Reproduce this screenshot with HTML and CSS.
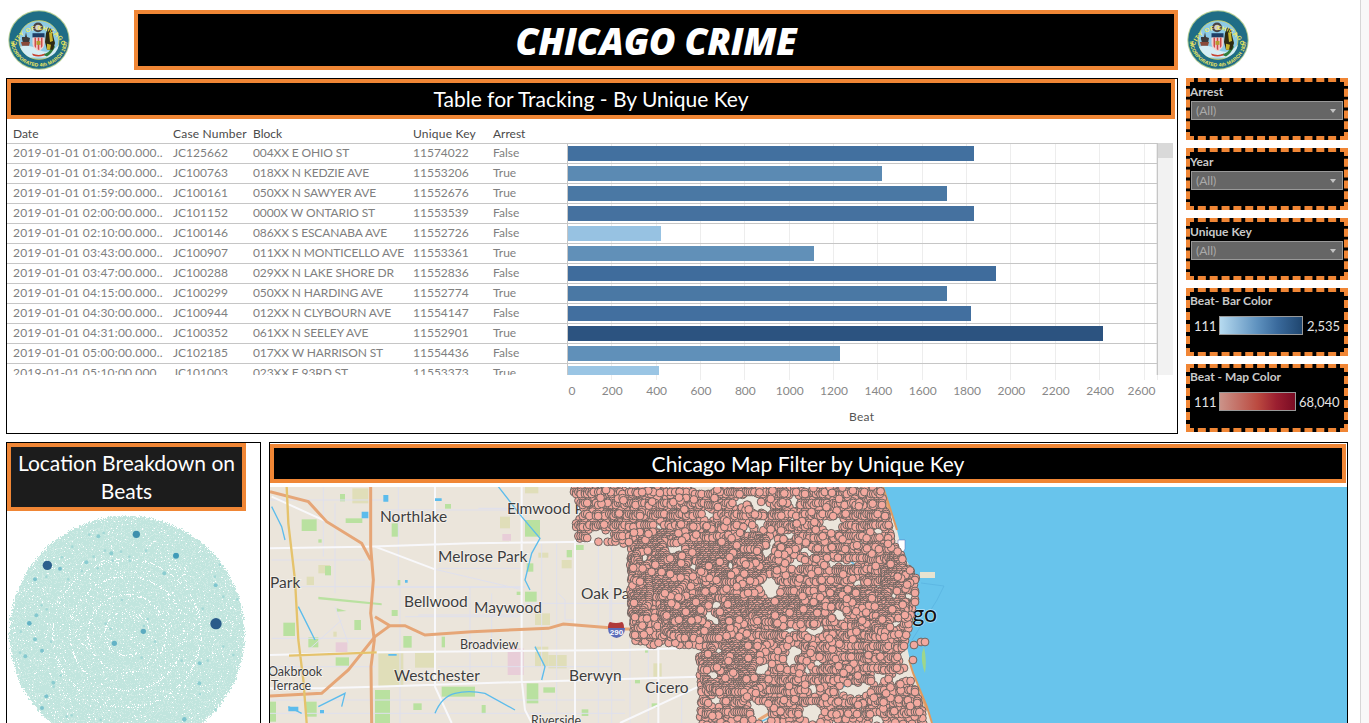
FILE: index.html
```html
<!DOCTYPE html>
<html lang="en">
<head>
<meta charset="utf-8">
<title>Chicago Crime</title>
<link rel="stylesheet" href="styles.css">
</head>
<body>
<svg class="defs" width="0" height="0" aria-hidden="true">
  <defs>
    <path id="sealTop" d="M7.500 38A24.500 24.500 0 0 1 54.500 38"/>
    <path id="sealBot" d="M2.500 30A28.500 28.500 0 0 0 59.500 30"/>
  </defs>
  <symbol id="seal" viewBox="0 0 62 62" preserveAspectRatio="none">
    <circle cx="31" cy="31" r="30.700" fill="#b4cd92"/>
    <circle cx="31" cy="31" r="29.700" fill="#1f6d86"/>
    <circle cx="31" cy="31" r="20" fill="#8ccae6" stroke="#d9d65a" stroke-width=".8"/>
    <path d="M12 38q9-3 19 3t20-5q-2 10-11 13H22q-7-3-10-11z" fill="#d4edf5"/>
    <path d="M34 46q8-1 11-10l2 2q-3 7-8 10z" fill="#2f7d3c"/>
    <circle cx="30" cy="18" r="5" fill="#4a4444"/>
    <circle cx="30" cy="18" r="2.800" fill="#d4cfca"/>
    <path d="M14 28h3l1-5 1 5 3 1-1 5h-6l-1-4z" fill="#3d3a3a"/>
    <path d="M13 33h9l-1 4h-7z" fill="#8a4a3a"/>
    <path d="M40 18l4 2 1 6 2 8-2 7h-6l-2-8 1-9z" fill="#2d2a12"/>
    <path d="M41 23l3 1 1 8-3 1zM39 35l4 1-1 5h-3z" fill="#c9b52e"/>
    <rect x="24.500" y="24" width="12" height="4.500" fill="#1d3d66"/>
    <path d="M24.500 28.500h12v6q0 5-6 8-6-3-6-8z" fill="#f3d3cf"/>
    <path d="M26.500 28.500h1.600v11l-1.600-2zM29.700 28.500h1.600v13l-1.600-1zM32.900 28.500h1.600v9l-1.600 2z" fill="#cf4b4b"/>
    <path d="M28.500 32h4v4h-4z" fill="#b59b2e"/>
    <path d="M24 45q7 3 13 0l-1 2q-6 2-11 0z" fill="#c8402e"/>
    <text class="seal-text"><textPath href="#sealTop" startOffset="50%" text-anchor="middle">CITY OF CHICAGO</textPath></text>
    <text class="seal-text seal-bottom"><textPath href="#sealBot" startOffset="50%" text-anchor="middle">INCORPORATED 4th MARCH 1837</textPath></text>
  </symbol>
</svg>

<main class="dash">
  <header class="top">
    <div class="logo-slot"><svg class="seal"><use href="#seal"/></svg></div>
    <h1 class="main-title">CHICAGO CRIME</h1>
    <div class="logo-slot-right"><svg class="seal"><use href="#seal"/></svg></div>
  </header>

  <section class="mid">
    <div class="panel table-panel">
      <h2 class="band">Table for Tracking - By Unique Key</h2>
      <div class="row head-row">
        <span class="c-date">Date</span><span class="c-case">Case Number</span><span class="c-block">Block</span><span class="c-key">Unique Key</span><span class="c-arrest">Arrest</span>
      </div>
      <div class="table-body">
        <div class="rows">
          <div class="row"><span class="c-date">2019-01-01 01:00:00.000..</span><span class="c-case">JC125662</span><span class="c-block">004XX E OHIO ST</span><span class="c-key">11574022</span><span class="c-arrest">False</span><span class="c-bar"><i class="bar" style="width:406px;background:#42709f"></i></span></div>
          <div class="row"><span class="c-date">2019-01-01 01:34:00.000..</span><span class="c-case">JC100763</span><span class="c-block">018XX N KEDZIE AVE</span><span class="c-key">11553206</span><span class="c-arrest">True</span><span class="c-bar"><i class="bar" style="width:314px;background:#5b8ab3"></i></span></div>
          <div class="row"><span class="c-date">2019-01-01 01:59:00.000..</span><span class="c-case">JC100161</span><span class="c-block">050XX N SAWYER AVE</span><span class="c-key">11552676</span><span class="c-arrest">True</span><span class="c-bar"><i class="bar" style="width:379px;background:#4a78a4"></i></span></div>
          <div class="row"><span class="c-date">2019-01-01 02:00:00.000..</span><span class="c-case">JC101152</span><span class="c-block">0000X W ONTARIO ST</span><span class="c-key">11553539</span><span class="c-arrest">False</span><span class="c-bar"><i class="bar" style="width:406px;background:#45719f"></i></span></div>
          <div class="row"><span class="c-date">2019-01-01 02:10:00.000..</span><span class="c-case">JC100146</span><span class="c-block">086XX S ESCANABA AVE</span><span class="c-key">11552726</span><span class="c-arrest">False</span><span class="c-bar"><i class="bar" style="width:93px;background:#97c2e2"></i></span></div>
          <div class="row"><span class="c-date">2019-01-01 03:43:00.000..</span><span class="c-case">JC100907</span><span class="c-block">011XX N MONTICELLO AVE</span><span class="c-key">11553361</span><span class="c-arrest">True</span><span class="c-bar"><i class="bar" style="width:246px;background:#6190b8"></i></span></div>
          <div class="row"><span class="c-date">2019-01-01 03:47:00.000..</span><span class="c-case">JC100288</span><span class="c-block">029XX N LAKE SHORE DR</span><span class="c-key">11552836</span><span class="c-arrest">False</span><span class="c-bar"><i class="bar" style="width:428px;background:#3f6c9c"></i></span></div>
          <div class="row"><span class="c-date">2019-01-01 04:15:00.000..</span><span class="c-case">JC100299</span><span class="c-block">050XX N HARDING AVE</span><span class="c-key">11552774</span><span class="c-arrest">True</span><span class="c-bar"><i class="bar" style="width:379px;background:#4a78a4"></i></span></div>
          <div class="row"><span class="c-date">2019-01-01 04:30:00.000..</span><span class="c-case">JC100944</span><span class="c-block">012XX N CLYBOURN AVE</span><span class="c-key">11554147</span><span class="c-arrest">False</span><span class="c-bar"><i class="bar" style="width:403px;background:#426f9f"></i></span></div>
          <div class="row"><span class="c-date">2019-01-01 04:31:00.000..</span><span class="c-case">JC100352</span><span class="c-block">061XX N SEELEY AVE</span><span class="c-key">11552901</span><span class="c-arrest">True</span><span class="c-bar"><i class="bar" style="width:535px;background:#2c5380"></i></span></div>
          <div class="row"><span class="c-date">2019-01-01 05:00:00.000..</span><span class="c-case">JC102185</span><span class="c-block">017XX W HARRISON ST</span><span class="c-key">11554436</span><span class="c-arrest">False</span><span class="c-bar"><i class="bar" style="width:272px;background:#6090b9"></i></span></div>
          <div class="row"><span class="c-date">2019-01-01 05:10:00.000..</span><span class="c-case">JC101003</span><span class="c-block">023XX E 93RD ST</span><span class="c-key">11553373</span><span class="c-arrest">True</span><span class="c-bar"><i class="bar" style="width:91px;background:#9ac5e4"></i></span></div>
        </div>
        <div class="vscroll"><div class="vthumb"></div></div>
      </div>
      <div class="axis">
        <div class="axis-strip"></div>
        <div class="ticks"><span>0</span><span>200</span><span>400</span><span>600</span><span>800</span><span>1000</span><span>1200</span><span>1400</span><span>1600</span><span>1800</span><span>2000</span><span>2200</span><span>2400</span><span>2600</span></div>
        <div class="axis-title">Beat</div>
      </div>
    </div>

    <aside class="filters">
      <div class="filter">
        <div class="filter-label">Arrest</div>
        <div class="select"><span>(All)</span><i class="caret"></i></div>
      </div>
      <div class="filter">
        <div class="filter-label">Year</div>
        <div class="select"><span>(All)</span><i class="caret"></i></div>
      </div>
      <div class="filter">
        <div class="filter-label">Unique Key</div>
        <div class="select"><span>(All)</span><i class="caret"></i></div>
      </div>
      <div class="filter legend">
        <div class="filter-label">Beat- Bar Color</div>
        <div class="ramp-row"><span class="ramp-min">111</span><i class="ramp ramp-blue"></i><span>2,535</span></div>
      </div>
      <div class="filter legend">
        <div class="filter-label">Beat - Map Color</div>
        <div class="ramp-row"><span class="ramp-min">111</span><i class="ramp ramp-red"></i><span>68,040</span></div>
      </div>
    </aside>
  </section>

  <section class="bottom">
    <div class="panel bubble-panel">
      <h2 class="band band-two">Location Breakdown on Beats</h2>
      <canvas id="bubbles" class="bubbles" width="253" height="212"></canvas>
    </div>
    <div class="panel map-panel">
      <h2 class="band band-map">Chicago Map Filter by Unique Key</h2>
      <div class="map">
        <svg class="map-svg" viewBox="270 487 1077 236" width="1077" height="236" role="img" aria-label="Map of Chicago">
          <rect x="270" y="487" width="1077" height="236" class="land"/>
          <g transform="translate(265 480) scale(.33333)">
            <g class="sand">
              <rect x="262" y="25" width="48" height="45"/><rect x="125" y="290" width="22" height="25"/><rect x="160" y="255" width="35" height="25"/>
              <rect x="705" y="110" width="30" height="35"/><rect x="820" y="218" width="30" height="15"/><rect x="890" y="240" width="30" height="25"/>
              <rect x="810" y="400" width="45" height="35"/>
              <rect x="1165" y="550" width="25" height="40"/><rect x="780" y="20" width="40" height="20"/><rect x="205" y="455" width="10" height="15"/>
              <rect x="340" y="520" width="75" height="100"/><rect x="450" y="518" width="60" height="45"/><rect x="810" y="500" width="40" height="60"/><rect x="850" y="525" width="55" height="40"/>
            </g>
            <g class="park">
              <rect x="110" y="118" width="45" height="35"/><rect x="225" y="42" width="15" height="22"/><rect x="380" y="130" width="20" height="40"/>
              <rect x="242" y="115" width="50" height="14"/><rect x="540" y="72" width="18" height="14"/><rect x="160" y="178" width="10" height="10"/>
              <rect x="180" y="258" width="18" height="28"/><rect x="398" y="300" width="8" height="16"/><rect x="268" y="420" width="20" height="30"/>
              <rect x="380" y="390" width="18" height="18"/><rect x="55" y="428" width="35" height="40"/><rect x="130" y="472" width="30" height="30"/>
              <rect x="212" y="532" width="40" height="25"/>
              <rect x="415" y="468" width="25" height="35"/><rect x="530" y="470" width="10" height="32"/><rect x="780" y="120" width="45" height="50"/>
              <rect x="785" y="250" width="20" height="25"/><rect x="780" y="335" width="35" height="30"/>
              <rect x="785" y="610" width="35" height="60"/><rect x="905" y="210" width="16" height="22"/><rect x="932" y="195" width="24" height="15"/>
              <rect x="755" y="335" width="12" height="10"/><rect x="835" y="622" width="35" height="16"/><rect x="950" y="688" width="20" height="20"/>
              <rect x="120" y="665" width="35" height="45"/><rect x="15" y="665" width="18" height="60"/><rect x="330" y="630" width="45" height="99"/>
              <rect x="530" y="620" width="100" height="30"/><rect x="445" y="670" width="25" height="20"/><rect x="650" y="675" width="12" height="25"/>
              <rect x="1110" y="600" width="15" height="10"/><rect x="1140" y="510" width="12" height="8"/><rect x="1160" y="670" width="18" height="12"/>
              <path d="M160 350l190 20v6l-190-18zM215 385l30 8-30 2z"/>
            </g>
            <g class="pink">
              <rect x="212" y="487" width="35" height="30"/><rect x="728" y="505" width="48" height="80"/><rect x="712" y="162" width="26" height="20"/>
            </g>
            <path class="minor" d="M15 60H360M360 90H760M640 85H770M20 320H780M330 322H780M780 370H1080M420 410H760M20 475H330M15 560H330M520 560H1040M20 660H1080M15 700H1080M175 20V230M210 70V340M400 20V300M405 320V729M615 320V600M680 340V560M830 190V600M875 190V729M1000 190V729M1040 190V729M1095 480V729M1150 480V729M1250 600V729M20 240H300M230 420L130 510M510 268L775 330M460 405H770M520 265H770M210 380L250 490M640 10H770M880 340l20 20v60h30M1035 310V430"/>
            <path class="major" d="M15 205L300 200L620 190L1400 180M15 525L330 517L1080 510L1400 500M15 625H170L330 620L800 605L1300 590M510 20V620L560 729M770 20V600L780 690L800 729M930 180V729M1180 480V729M330 200L510 268M20 50L185 125M1065 729L1300 620"/>
            <path class="creek" d="M700 20L770 110L825 175L800 220L780 300L795 330M20 80L50 140L60 180M100 380L130 440L150 480M810 500L840 560L830 600M510 700Q530 650 570 640T660 640L750 690M160 680L240 640L230 680M70 680L110 700M1480 729L1640 650L1800 600M1600 110L1700 200L1790 270M1830 470L1840 560L1790 600"/>
            <path class="water-fill" d="M355 45h15v20h-15zM290 95h20v20h-20zM510 55h20v8h-20zM420 300h8v8h-8zM370 522h25v5h-25zM70 680h30v14H70zM165 690h12v10h-12z"/>
            <g class="highway">
              <path d="M317 15V200L325 300L317 400L328 480L318 560L320 729"/>
              <path d="M15 35L130 65L185 125L290 190L317 240"/>
              <path d="M330 410L375 437H420L480 465L620 455L850 445L895 432L1080 447L1120 447"/>
              <path d="M15 648L170 640L250 570L330 470L375 437"/>
              <path d="M1600 90L1630 105M1810 625L1850 640M1530 690L1480 720M1850 20L1870 90M1940 540L1985 690"/>
            </g>
            <path class="tollway" d="M65 20L70 130L90 300L100 480L115 600L125 729M72 527L335 517"/>
          </g>
          <path class="lake" d="M883 487L897 530L903 555L917 577L913 597L910 630L907 647L913 673L927 707L932 723H1347V487Z"/>
          <path class="shore" d="M883 487L889 505L897 530M909 660L913 673L927 707L932 723"/>
          <path class="pier-line" d="M921 583L944 586L937 600L912 640"/>
          <rect class="pier" x="920" y="572" width="15" height="6"/>
          <path class="isle" d="M924 647q3 14 1 26q-4-10-3-20z"/>
          <path class="white-shield" d="M898 540h7v9l-3 5-4-5z"/>
          <g class="shield">
            <path class="shield-red" d="M608 628q0-5 2-6q6 2 12 0q2 1 2 6z"/>
            <path class="shield-blue" d="M608 628h17q0 8-8.500 10q-8.500-2-8.500-10z"/>
            <text class="shield-text" x="616.500" y="635">290</text>
          </g>
          <g class="labels">
            <text class="l-lg" x="380" y="522">Northlake</text>
            <text class="l-lg" x="507" y="514">Elmwood Park</text>
            <text class="l-lg" x="438" y="562">Melrose Park</text>
            <text class="l-lg" x="270" y="588">Park</text>
            <text class="l-lg" x="404" y="607">Bellwood</text>
            <text class="l-lg" x="474" y="613">Maywood</text>
            <text class="l-lg" x="581" y="599">Oak Park</text>
            <text class="l-sm" x="460" y="649">Broadview</text>
            <text class="l-sm" x="268" y="676">Oakbrook</text>
            <text class="l-sm" x="271" y="690">Terrace</text>
            <text class="l-lg" x="394" y="681">Westchester</text>
            <text class="l-lg" x="569" y="681">Berwyn</text>
            <text class="l-lg" x="645" y="693">Cicero</text>
            <text class="l-sm" x="531" y="725">Riverside</text>
            <text class="l-xl" x="937" y="622">Chicago</text>
          </g>
        </svg>
        <canvas id="crimes" class="crimes" width="1077" height="236"></canvas>
      </div>
    </div>
  </section>
</main>
<aside class="page-scroll"></aside>
<script src="app.js"></script>
</body>
</html>
```

FILE: styles.css
```css
* { box-sizing: border-box; }
html, body { margin: 0; height: 723px; overflow: hidden; background: #fff; }
body { display: flex; font-family: "Lato", "Liberation Sans", sans-serif; color: #444; }
.defs { position: absolute; }
.dash { width: 1360px; padding: 10px 0 0 6px; flex: none; }
.page-scroll { flex: 1; background: #f8f8f8; border-left: 1px solid #d6d6d6; }

.top { display: flex; height: 60px; }
.logo-slot { width: 128px; padding-left: 2px; flex: none; }
.logo-slot-right { margin-left: 9px; flex: none; }
.seal { display: block; width: 62px; height: 60px; }
.seal-text { font: 700 6px "Liberation Sans", sans-serif; fill: #f2ea5e; letter-spacing: .5px; }
.seal-bottom { font-size: 5px; letter-spacing: .1px; }
.main-title {
  width: 1044px; margin: 0; flex: none;
  background: #000; border: 4px solid #f08635; color: #fff;
  font: italic 800 36.500px/55px "Open Sans", sans-serif; text-align: center; letter-spacing: -0.3px;
}

.mid { display: flex; gap: 8px; margin-top: 8px; }
.panel { border: 1px solid #000; background: #fff; flex: none; }
.table-panel { width: 1172px; height: 356px; }
.band {
  margin: 0; background: #000; color: #fff; border: 4px solid #f08635;
  font: 400 21px/32px "Lato", sans-serif; text-align: center;
}
.table-panel .band { width: 1168px; height: 40px; }

.row { display: flex; height: 20px; font-size: 12px; line-height: 18px; color: #808080; border-top: 1px solid #c6c6c6; white-space: nowrap; }
.row > span { display: block; flex: none; }
.head-row { height: 24px; padding-top: 6px; line-height: 17px; border-top: 0; color: #4a4a4a; }
.c-date { width: 166px; padding-left: 6px; letter-spacing: .2px; }
.c-case { width: 80px; }
.c-block { width: 160px; letter-spacing: -.12px; }
.c-key { width: 80px; }
.c-arrest { width: 74px; }
.head-row .c-date, .head-row .c-block { letter-spacing: 0; }
.head-row .c-case, .head-row .c-key { letter-spacing: .2px; }
.c-bar {
  width: 591px; height: 19px; padding: 1px 0 0 0;
  border-left: 1px solid #c6c6c6; border-right: 1px solid #c6c6c6;
  background-image: repeating-linear-gradient(to right, #ededed 0 1px, transparent 1px 44.35px);
  background-position-x: -1px;
}
.bar { display: block; height: 15px; margin-top: 1px; }

.table-body { display: flex; height: 232px; overflow: hidden; }
.rows { width: 1151px; height: 232px; overflow: hidden; flex: none; }
.vscroll { width: 15px; height: 232px; background: #f2f2f2; flex: none; }
.vthumb { height: 15px; background: #d9d9d9; }

.axis { height: 58px; }
.axis-strip {
  height: 5px; margin-left: 561px; width: 590px;
  background-image: repeating-linear-gradient(to right, #ededed 0 1px, transparent 1px 44.35px);
  background-position-x: -1px;
}
.ticks { display: flex; margin-left: 538.800px; height: 22px; padding-top: 3px; font-size: 12px; line-height: 16px; color: #888; }
.ticks span { width: 44.350px; flex: none; text-align: center; }
.ticks span:first-child { padding-left: 8px; }
.ticks span:last-child { padding-right: 6px; }
.axis-title { margin: 8px 0 0 842px; font-size: 12px; letter-spacing: .3px; line-height: 14px; color: #555; }

.filters { display: flex; flex-direction: column; gap: 8px; width: 162px; flex: none; }
.filter { height: 62px; background: #000; border: 4px dashed #f08635; color: #d4d4d4; }
.legend { height: 68px; }
.filter-label { height: 16px; font-size: 12px; font-weight: 700; line-height: 19px; color: #c9c9c9; white-space: nowrap; }
.legend .filter-label { line-height: 18px; }
.select {
  display: flex; align-items: center; justify-content: space-between;
  width: 152px; height: 19px; margin: 3px 0 0 1px; padding: 0 6px 0 4px;
  background: #666; border: 1px solid #999; color: #aaa; font-size: 12px;
}
.caret { width: 0; height: 0; border: 3.5px solid transparent; border-top: 4px solid #c4c4c4; border-bottom: 0; }
.ramp-row { display: flex; align-items: center; height: 19px; margin-top: 8px; padding-left: 4px; font-size: 13px; color: #e4e4e4; white-space: nowrap; }
.ramp-min { width: 25px; flex: none; }
.ramp { display: block; height: 19px; margin-right: 4px; border: 1px solid #999; flex: none; }
.ramp-blue { width: 84px; background: linear-gradient(to right, #b6daf0, #5f92bf 45%, #3a6a9c 70%, #1f466f); }
.ramp-red { width: 77px; margin-right: 3px; background: linear-gradient(to right, #cb9389, #bb4a40 50%, #9b1f30 75%, #7a0c24); }

.bottom { display: flex; gap: 8px; margin-top: 8px; }
.bubble-panel { width: 255px; height: 290px; }
.band-two { width: 239px; height: 68px; background: #1c1c1c; line-height: 28px; padding-top: 2px; }
.bubbles { display: block; }
.map-panel { width: 1079px; height: 290px; }
.band-map { width: 1076px; height: 39px; margin-top: 1px; line-height: 31px; }
.map { position: relative; margin-top: 4px; height: 236px; overflow: hidden; }
.map-svg { display: block; }
.crimes { position: absolute; left: 0; top: 0; }

.land { fill: #ebe5db; }
.park { fill: #b9e1a0; }
.sand { fill: #e0deb9; }
.pink { fill: #e8cdd8; }
.minor { fill: none; stroke: #dfe0ee; stroke-width: 3; }
.major { fill: none; stroke: #f8f8fb; stroke-width: 6; }
.creek { fill: none; stroke: #5cbcec; stroke-width: 4; }
.water-fill { fill: #5cbcec; }
.highway { fill: none; stroke: #e6a677; stroke-width: 9; }
.tollway { fill: none; stroke: #e5c36c; stroke-width: 7; }
.lake { fill: #68c4ec; }
.shore { fill: none; stroke: #e09a60; stroke-width: 2; }
.pier { fill: #e8e3d0; }
.pier-line { fill: none; stroke: #56aede; stroke-width: .6; }
.isle { fill: #9fd68a; }
.white-shield { fill: #fff; stroke: #5a6bb5; stroke-width: .5; }
.shield-red { fill: #b03a3a; }
.shield-blue { fill: #5a6bb8; }
.shield-text { font: 700 8px "Liberation Sans", sans-serif; fill: #fff; text-anchor: middle; }
.labels text { fill: #3d3d3d; paint-order: stroke; stroke: rgba(255,255,255,.55); stroke-width: 1.500px; font-family: "Lato", sans-serif; }
.l-lg { font-size: 15.500px; }
.l-sm { font-size: 12.500px; }
.labels .l-xl { font-size: 23px; text-anchor: end; fill: #111; }
```

FILE: app.js
```javascript
function rng(seed) {
  let s = seed >>> 0;
  return function () {
    s = (Math.imul(s, 1664525) + 1013904223) >>> 0;
    return (s >>> 8) / 16777216;
  };
}

function drawBubbles() {
  const canvas = document.getElementById("bubbles");
  const ctx = canvas.getContext("2d");
  const rand = rng(7);
  const cx = 119.5, cy = 122, R = 117;
  const rings = [22, 39, 57, 74];
  for (let y = 0; y < canvas.height; y++) {
    for (let x = 0; x < canvas.width; x++) {
      const d = Math.hypot(x - cx, y - cy);
      if (d > R - 1 + rand() * 3) continue;
      let gap = 0.035;
      for (const r of rings) if (Math.abs(d - r) < 0.9) gap = 0.3;
      const v = rand();
      ctx.fillStyle = v < gap ? "#ffffff" : v < 0.25 ? "#d0ebe5" : "#c1e5de";
      ctx.fillRect(x, y, 1, 1);
    }
  }
  const big = [
    [648,551,17,"#2a5b8a"],[142,376,14,"#2c5f8d"],[409,283,11,"#3f90ad"],[528,347,9,"#3f9bb8"],
    [430,574,8,"#5cabc0"],[343,610,8,"#64b3c6"],[88,550,7,"#63b3c5"],[180,386,6,"#77bfcb"],
    [105,418,6,"#7cc3cd"],[647,436,6,"#7fc6cf"],[295,289,6,"#8ccdd0"],[259,367,6,"#8accd1"],
    [334,340,6,"#8ccdd0"],[109,526,6,"#85c9cf"],[105,598,6,"#85c9cf"],[126,632,6,"#7cc3cd"],
    [76,649,6,"#85c9cf"],[160,728,6,"#8ccdd0"],[139,769,6,"#7cc3cd"],[126,804,6,"#7cc3cd"],
    [598,730,6,"#8ccdd0"],[599,670,6,"#85c9cf"],[553,838,7,"#7cc3cd"],[493,400,6,"#8ccdd0"]
  ];
  const small = [[390,362],[388,350],[62,575],[60,638],[161,740],[647,809],[623,662],[600,763],[200,830],[215,826],[302,840],[545,662],[425,653],[465,605],[432,558],[443,537],[317,551],[332,566],[366,480],[608,506],[670,470],[712,478],[660,374],[645,410],[438,332],[363,335],[315,332],[338,362],[281,350],[245,393],[293,385],[186,352],[217,320],[268,284],[311,279],[205,418],[139,410],[125,496],[140,508],[153,605],[182,706],[670,620],[700,645]];
  small.forEach(function (p) { big.push([p[0], p[1], 4, "#a3d8d6"]); });
  big.forEach(function (b) {
    ctx.beginPath();
    ctx.arc(b[0] / 3 - 7, 440 + b[1] / 3 - 511, b[2] / 3, 0, Math.PI * 2);
    ctx.fillStyle = b[3];
    ctx.fill();
  });
}

function inPoly(poly, x, y) {
  let inside = false;
  for (let i = 0, j = poly.length - 1; i < poly.length; j = i++) {
    const xi = poly[i][0], yi = poly[i][1], xj = poly[j][0], yj = poly[j][1];
    if ((yi > y) !== (yj > y) && x < ((xj - xi) * (y - yi)) / (yj - yi) + xi) inside = !inside;
  }
  return inside;
}

function drawCrimes() {
  const canvas = document.getElementById("crimes");
  const ctx = canvas.getContext("2d");
  const rand = rng(42);
  const region = [[574,487],[880,487],[888,520],[895,545],[916,578],[916,600],[906,640],[903,665],[916,690],[926,723],[700,723],[699,645],[634,645],[630,600],[630,545],[578,540],[574,520]];
  const holes = [[770,587,10,13],[831,525,11,7],[848,564,11,4],[705,490,11,4],[790,660,7,9],[812,632,8,5],[854,690,18,7],[812,712,12,10],[762,712,9,11],[575,510,8,9],[600,535,14,5]];
  for (let i = 0; i < 55; i++) {
    holes.push([640 + rand() * 270, 495 + rand() * 225, 5 + rand() * 2.5, 5 + rand() * 2]);
  }
  const dense = [
    [720,557,40,14],[738,572,40,12],[660,565,30,34],[712,612,52,16],[700,630,36,10],
    [800,612,50,14],[895,590,12,34],[730,662,30,18],[735,682,30,12],[640,590,10,40],
    [770,545,30,8],[885,612,14,22],[850,600,24,10]
  ];
  const pts = [];
  function ok(x, y) {
    if (!inPoly(region, x, Math.min(y, 722))) return false;
    return !holes.some(function (h) {
      const dx = (x - h[0]) / h[2], dy = (y - h[1]) / h[3];
      return dx * dx + dy * dy < 1;
    });
  }
  for (let y = 487; y < 728; y += 3.6) {
    const rowOffset = rand() * 5;
    for (let x = 560 + rowOffset; x < 930; x += 5) {
      const px = x + (rand() - 0.5) * 4;
      const py = y + (rand() - 0.5) * 2.5;
      if (ok(px, py) && rand() < 0.85) pts.push([px, py]);
    }
  }
  for (let i = pts.length - 1; i > 0; i--) {
    const j = Math.floor(rand() * (i + 1));
    const t = pts[i]; pts[i] = pts[j]; pts[j] = t;
  }
  // street-aligned runs: tightly spaced dots leave only their outlines visible
  for (let y = 492; y < 723; y += 11) {
    for (let x = 574; x < 925; x += 2.2) {
      if (rand() < 0.6 && ok(x, y)) pts.push([x, y]);
      if (rand() < 0.35 && ok(x, y + 2)) pts.push([x, y + 2]);
    }
  }
  dense.forEach(function (d) {
    for (let y = d[1] - d[3]; y <= d[1] + d[3]; y += 2) {
      for (let x = d[0] - d[2]; x <= d[0] + d[2]; x += 2.4) {
        const nx = (x - d[0]) / d[2], ny = (y - d[1]) / d[3];
        if (nx * nx + ny * ny > 1 || rand() < 0.25) continue;
        const px = x + (rand() - 0.5) * 2;
        if (ok(px, y)) pts.push([px, y]);
      }
    }
  });
  // single dots sitting on top, as in the thinner parts of the plot
  for (let i = 0; i < 650; i++) {
    const px = 574 + rand() * 350, py = 487 + rand() * 236;
    if (ok(px, py)) pts.push([px, py]);
  }
  [[897,591],[914,645],[921,642],[925,642],[913,660]].forEach(function (p) { pts.push(p); });
  ctx.lineWidth = 1;
  ctx.strokeStyle = "#6d6561";
  ctx.fillStyle = "#f3a99f";
  pts.forEach(function (p) {
    ctx.beginPath();
    ctx.arc(p[0] - 270, p[1] - 487, 3.9, 0, Math.PI * 2);
    ctx.fill();
    ctx.stroke();
  });
}

drawBubbles();
drawCrimes();
```
